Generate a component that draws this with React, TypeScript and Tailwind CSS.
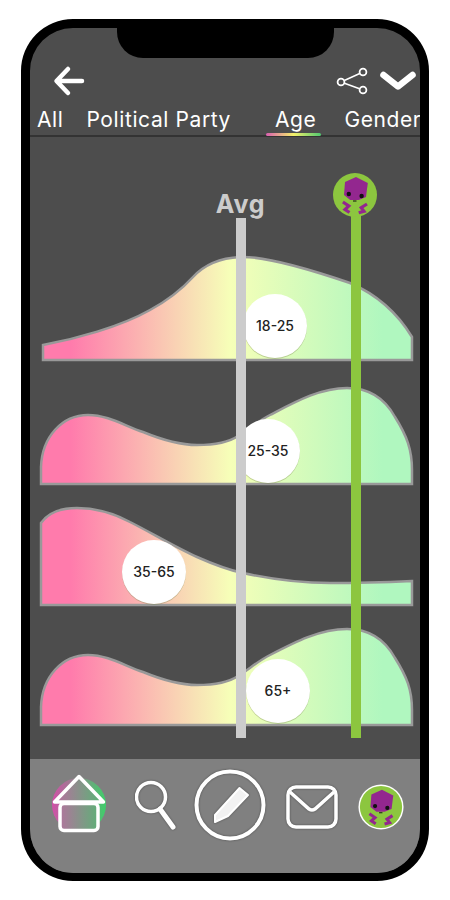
import React from "react";

const curves = [
  "M43 345 C75 339 120 327 150 310 C172 298 183 288 193 277 C205 264 220 258 240 257 C262 256 300 266 350 283 C378 295 398 314 412 337 L412 360 L43 360 Z",
  "M41 484 L41 467 C42 437 62 415 88 415 C108 415 125 426 143 432 C160 439 178 445 197 445 C215 445 228 443 238 436 C248 430 258 421 270 415 C295 402 320 388 347 388 C365 388 383 395 395 417 C407 436 412 450 412 470 L412 484 Z",
  "M41 605 L41 523 C48 513 60 508 77 508 C98 508 115 514 130 522 C150 532 175 547 197 557 C215 565 228 570 243 573 C275 580 300 583 330 583 C360 583 390 582 412 581 L412 605 Z",
  "M41 725 L41 707 C42 677 62 655 88 655 C108 655 125 666 143 672 C160 679 178 685 197 685 C215 685 228 683 238 676 C248 670 258 661 270 655 C295 642 320 629 347 629 C365 629 383 636 395 658 C407 677 412 690 412 710 L412 725 Z",
];

const bubbles = [
  { label: "18-25", x: 275, y: 326 },
  { label: "25-35", x: 268, y: 451 },
  { label: "35-65", x: 154, y: 572 },
  { label: "65+", x: 278, y: 691 },
];

function AvatarShape() {
  return (
    <>
      <circle cx="22" cy="22" r="22" fill="#8cc63f" />
      <polygon points="23,4 34.8,10 33,24 25.7,27 17.2,27 11,22 12,9" fill="#93278f" />
      <circle cx="15.8" cy="21" r="2.2" fill="#111" />
      <circle cx="28.6" cy="23" r="2.2" fill="#111" />
      <path d="M20 28 h3.5" stroke="#111" strokeWidth="1" />
      <path d="M9.9 29 L15.8 33 L12 36.5 L16.5 39.5" fill="none" stroke="#93278f" strokeWidth="3.2" />
      <path d="M34 31 L28.2 34.7 L31 38.3 L25.7 39.8" fill="none" stroke="#93278f" strokeWidth="3.2" />
    </>
  );
}

export default function App() {
  return (
    <div className="w-[450px] h-[900px] bg-white pt-[19px] pl-[21px] font-['Inter',sans-serif]">
      <div className="relative w-[408px] h-[862px] border-[9px] border-b-[8px] border-black rounded-[52px] overflow-hidden bg-[#4d4d4d] flex flex-col">
        {/* Notch */}
        <div className="absolute top-0 left-[87px] w-[217px] h-[30px] bg-black rounded-b-[26px]" />

        {/* Header */}
        <div className="h-[109px] flex flex-col shrink-0">
          <div className="flex items-center justify-between pt-[37px] h-[68px] pl-[23px] pr-1">
            <svg viewBox="0 0 32 32" className="w-[32px] h-[32px]">
              <path d="M29 16 H5 M15 4 L3.5 16 L15 28" fill="none" stroke="#fff" strokeWidth="4.5" strokeLinecap="round" strokeLinejoin="round" />
            </svg>
            <div className="flex items-center gap-[10px]">
              <svg viewBox="0 0 34 30" className="w-[34px] h-[30px]">
                <path d="M5 16 L27 6 M5 16 L27 24" stroke="#fff" strokeWidth="1.5" />
                <circle cx="5" cy="16" r="3.4" fill="#4d4d4d" stroke="#fff" strokeWidth="1.8" />
                <circle cx="27" cy="6" r="3.4" fill="#4d4d4d" stroke="#fff" strokeWidth="1.8" />
                <circle cx="27" cy="24" r="3.4" fill="#4d4d4d" stroke="#fff" strokeWidth="1.8" />
              </svg>
              <svg viewBox="0 0 36 20" className="w-[36px] h-[20px]">
                <path d="M3.5 4 L18 15.5 L32.5 4" fill="none" stroke="#fff" strokeWidth="6.5" strokeLinecap="round" strokeLinejoin="round" />
              </svg>
            </div>
          </div>
          <div className="relative h-[41px] border-b-2 border-[#333] flex items-center text-[21px] leading-[28px] tracking-[0.6px] text-white whitespace-nowrap pt-[8px]">
            <span className="ml-[7px]">All</span>
            <span className="ml-[23px]">Political Party</span>
            <span className="ml-[44px]">Age</span>
            <span className="ml-[28px]">Gender</span>
            <div className="absolute left-[236px] -bottom-[1px] w-[55px] h-[3px] rounded-full bg-[linear-gradient(90deg,#d95fb0,#f4f06a_50%,#4fc870)]" />
          </div>
        </div>

        {/* Chart */}
        <svg viewBox="30 137 390 622" className="flex-1 w-[390px]">
          <defs>
            <linearGradient id="band" gradientUnits="userSpaceOnUse" x1="41" y1="0" x2="412" y2="0">
              <stop offset="0.08" stopColor="#ff7bac" />
              <stop offset="0.51" stopColor="#f6ffb8" />
              <stop offset="0.92" stopColor="#b0f7bf" />
            </linearGradient>
          </defs>
          {curves.map((d) => (
            <path key={d} d={d} fill="url(#band)" stroke="#999" strokeWidth="2.5" />
          ))}
          {bubbles.map((b) => (
            <g key={b.label}>
              <circle cx={b.x} cy={b.y + 1} r="32" fill="#7c8a55" fillOpacity="0.4" />
              <circle cx={b.x} cy={b.y} r="32" fill="#fff" />
              <text x={b.x} y={b.y + 5} textAnchor="middle" fill="#222" className="text-[14px] font-medium">
                {b.label}
              </text>
            </g>
          ))}
          <rect x="236" y="218" width="10" height="520" fill="#ccc" />
          <rect x="351" y="205" width="10" height="533" fill="#8cc63f" />
          <text x="240.5" y="213" textAnchor="middle" fill="#ccc" className="text-[25px] font-bold tracking-[0.8px]">
            Avg
          </text>
          <g transform="translate(333 173)">
            <AvatarShape />
          </g>
        </svg>

        {/* Bottom nav */}
        <div className="h-[114px] shrink-0 bg-[#808080] flex items-start pl-[22px]">
          <svg viewBox="0 0 56 60" className="w-[56px] h-[60px] mt-[15px] shrink-0">
            <defs>
              <linearGradient id="home" x1="0" y1="0" x2="1" y2="0">
                <stop offset="0" stopColor="#d24fa8" />
                <stop offset="1" stopColor="#3ecf6a" />
              </linearGradient>
              <linearGradient id="homeSoft" gradientUnits="userSpaceOnUse" x1="4" y1="0" x2="50" y2="0">
                <stop offset="0" stopColor="#b86fa0" />
                <stop offset="1" stopColor="#58b574" />
              </linearGradient>
            </defs>
            <circle cx="27" cy="31" r="27" fill="url(#home)" />
            <path d="M27 2.5 L51.5 28 H2.5 Z" fill="url(#homeSoft)" stroke="#fff" strokeWidth="3.5" strokeLinejoin="round" />
            <rect x="8" y="29.5" width="38" height="27" rx="4" fill="url(#homeSoft)" stroke="#fff" strokeWidth="3.5" />
          </svg>
          <svg viewBox="0 0 44 56" className="w-[44px] h-[56px] mt-[21px] ml-[27px] shrink-0 drop-shadow-[0_0_1px_rgba(0,0,0,0.4)]">
            <circle cx="16" cy="17" r="14.5" fill="none" stroke="#fff" strokeWidth="3.5" />
            <path d="M25 29 L38 47" stroke="#fff" strokeWidth="5" strokeLinecap="round" />
          </svg>
          <svg viewBox="0 0 72 72" className="w-[72px] h-[72px] mt-[10px] ml-[15px] shrink-0 drop-shadow-[0_0_1px_rgba(0,0,0,0.4)]">
            <circle cx="36" cy="36" r="33.5" fill="none" stroke="#fff" strokeWidth="4" />
            <path d="M45.5 19 L54 26 L34 47 L21 53 L21 46 Z" fill="#f2f2f2" stroke="#fff" strokeWidth="2" strokeLinejoin="round" />
          </svg>
          <svg viewBox="0 0 52 44" className="w-[52px] h-[44px] mt-[26px] ml-[20px] shrink-0 drop-shadow-[0_0_1px_rgba(0,0,0,0.4)]">
            <rect x="2" y="2" width="48" height="40" rx="8" fill="none" stroke="#fff" strokeWidth="3.5" />
            <path d="M4 7 L23 24 Q26 26 29 24 L48 7" fill="none" stroke="#fff" strokeWidth="3.5" />
          </svg>
          <svg viewBox="-3 -3 50 50" className="w-[48px] h-[48px] mt-[24px] ml-[19px] shrink-0">
            <circle cx="22" cy="22" r="23.5" fill="#fff" />
            <AvatarShape />
          </svg>
        </div>
      </div>
    </div>
  );
}
